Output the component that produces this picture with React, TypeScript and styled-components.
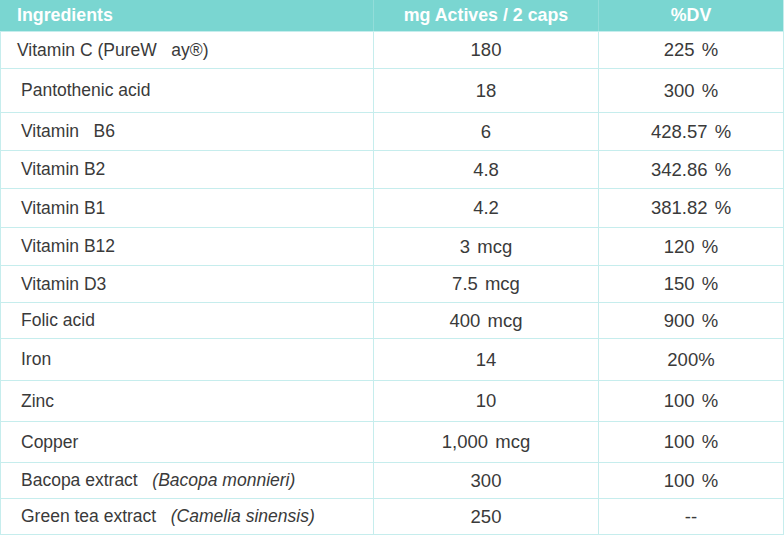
import React from "react";
import styled, { createGlobalStyle } from "styled-components";

const GlobalStyle = createGlobalStyle`
  html, body {
    margin: 0;
    padding: 0;
    background: #ffffff;
  }
  * {
    box-sizing: border-box;
  }
`;

const LINE = "#c6eded";
const HEAD = "#7ad6d1";

const Table = styled.div`
  width: 784px;
  border-right: 1px solid ${LINE};
  font-family: "Liberation Sans", Arial, sans-serif;
  color: #3a3a3a;
`;

const Row = styled.div<{ $h: number; $head?: boolean }>`
  display: grid;
  grid-template-columns: 373px 225px 185px;
  height: ${(p) => p.$h}px;
  border-bottom: 1px solid ${LINE};
  background: ${(p) => (p.$head ? HEAD : "#ffffff")};
`;

const HeadCell = styled.div<{ $center?: boolean }>`
  display: flex;
  align-items: center;
  justify-content: ${(p) => (p.$center ? "center" : "flex-start")};
  padding-left: ${(p) => (p.$center ? 0 : 16)}px;
  border-left: 1px solid rgba(255, 255, 255, 0.18);
  font-size: 17.8px;
  font-weight: 700;
  color: #ffffff;
  &:first-child {
    border-left-color: ${HEAD};
  }
`;

const Cell = styled.div<{ $center?: boolean; $indent?: number }>`
  display: flex;
  align-items: center;
  justify-content: ${(p) => (p.$center ? "center" : "flex-start")};
  padding-left: ${(p) => (p.$center ? 0 : p.$indent ?? 20)}px;
  border-left: 1px solid ${LINE};
  font-size: ${(p) => (p.$center ? 18.5 : 17.5)}px;
  word-spacing: ${(p) => (p.$center ? 2 : 0)}px;
  white-space: pre;
`;

const Latin = styled.em`
  font-style: italic;
`;

type Item = {
  name: string;
  latin?: string;
  mg: string;
  dv: string;
  h: number;
  indent?: number;
};

const items: Item[] = [
  { name: "Vitamin C (PureW   ay®)", mg: "180", dv: "225 %", h: 37, indent: 16 },
  { name: "Pantothenic acid", mg: "18", dv: "300 %", h: 44 },
  { name: "Vitamin   B6", mg: "6", dv: "428.57 %", h: 38 },
  { name: "Vitamin B2", mg: "4.8", dv: "342.86 %", h: 38 },
  { name: "Vitamin B1", mg: "4.2", dv: "381.82 %", h: 39 },
  { name: "Vitamin B12", mg: "3 mcg", dv: "120 %", h: 38 },
  { name: "Vitamin D3", mg: "7.5 mcg", dv: "150 %", h: 37 },
  { name: "Folic acid", mg: "400 mcg", dv: "900 %", h: 36 },
  { name: "Iron", mg: "14", dv: "200%", h: 42 },
  { name: "Zinc", mg: "10", dv: "100 %", h: 41 },
  { name: "Copper", mg: "1,000 mcg", dv: "100 %", h: 41 },
  { name: "Bacopa extract   ", latin: "(Bacopa monnieri)", mg: "300", dv: "100 %", h: 36 },
  { name: "Green tea extract   ", latin: "(Camelia sinensis)", mg: "250", dv: "--", h: 36 },
];

function App() {
  return (
    <>
      <GlobalStyle />
      <Table>
        <Row $h={32} $head>
          <HeadCell>Ingredients</HeadCell>
          <HeadCell $center>mg Actives / 2 caps</HeadCell>
          <HeadCell $center>%DV</HeadCell>
        </Row>
        {items.map((it) => (
          <Row key={it.name} $h={it.h}>
            <Cell $indent={it.indent}>
              {it.name}
              {it.latin && <Latin>{it.latin}</Latin>}
            </Cell>
            <Cell $center>{it.mg}</Cell>
            <Cell $center>{it.dv}</Cell>
          </Row>
        ))}
      </Table>
    </>
  );
}

export default App;
